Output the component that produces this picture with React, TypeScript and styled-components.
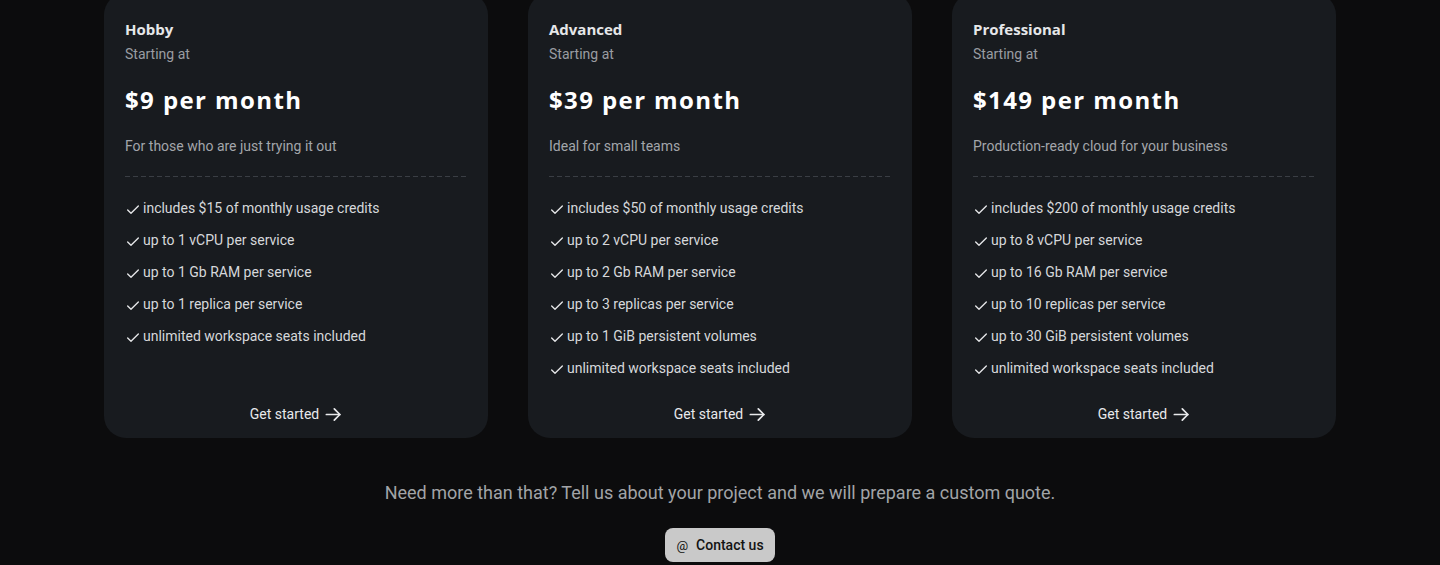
import React from "react";
import styled, { createGlobalStyle } from "styled-components";

const Global = createGlobalStyle`
  html, body { margin: 0; padding: 0; background: #0c0c0d; }
  body { font-family: Roboto, "Liberation Sans", sans-serif; color: #d4d6d9; overflow: hidden; }
  * { box-sizing: border-box; }
`;

const Page = styled.div`
  width: 1440px;
  height: 565px;
  overflow: hidden;
  display: flex;
  flex-direction: column;
  align-items: center;
`;

const Cards = styled.div`
  margin-top: -7px;
  display: grid;
  grid-template-columns: repeat(3, 384px);
  gap: 40px;
`;

const Card = styled.div`
  background: #181b1f;
  border-radius: 22px;
  padding: 25px 20px 14px 21px;
  display: flex;
  flex-direction: column;
  height: 445px;
`;

const Name = styled.div`
  font-family: "Open Sans", "DejaVu Sans", sans-serif;
  font-weight: 700;
  font-size: 15px;
  line-height: 22px;
  color: #e6e7e9;
`;

const Starting = styled.div`
  font-size: 14px;
  line-height: 20px;
  margin-top: 4px;
  color: #9a9da2;
`;

const Price = styled.div`
  font-family: "Open Sans", "DejaVu Sans", sans-serif;
  font-weight: 700;
  font-size: 24px;
  line-height: 32px;
  margin-top: 20px;
  letter-spacing: 1.4px;
  color: #ffffff;
`;

const Desc = styled.div`
  font-size: 14px;
  line-height: 20px;
  margin-top: 20px;
  color: #a3a6ab;
`;

const Divider = styled.div`
  margin-top: 20px;
  height: 1px;
  background-image: linear-gradient(to right, #3a3e44 60%, transparent 40%);
  background-size: 8px 1px;
  background-repeat: repeat-x;
`;

const Features = styled.ul`
  list-style: none;
  margin: 21px 0 0 0;
  padding: 0;
  display: flex;
  flex-direction: column;
  gap: 12px;
  flex: 1;
`;

const Feature = styled.li`
  display: flex;
  align-items: center;
  gap: 2px;
  font-size: 14px;
  line-height: 20px;
  color: #d6d8db;
`;

const CheckIcon = styled.svg`
  width: 16px;
  height: 16px;
  flex: none;
  margin-top: 3px;
`;

const GetStarted = styled.a`
  align-self: center;
  display: flex;
  align-items: center;
  gap: 5px;
  font-size: 14px;
  font-weight: 400;
  line-height: 20px;
  color: #e8e9eb;
  text-decoration: none;
`;

const Note = styled.p`
  margin: 43px 0 0 0;
  font-size: 18px;
  line-height: 24px;
  color: #a2a4a7;
`;

const Contact = styled.button`
  margin-top: 23px;
  height: 34px;
  padding: 0 11px 0 11px;
  border: none;
  border-radius: 8px;
  background: #c9c9c9;
  color: #131313;
  font-family: Roboto, "Liberation Sans", sans-serif;
  font-size: 14px;
  font-weight: 500;
  display: flex;
  align-items: center;
  gap: 8px;
`;

const At = styled.span`
  font-size: 13px;
  font-weight: 400;
`;

const Check = () => (
  <CheckIcon viewBox="0 0 24 24" fill="none" stroke="#e6e7e9" strokeWidth={2} strokeLinecap="round" strokeLinejoin="round">
    <path d="M20 6 9 17l-5-5" />
  </CheckIcon>
);

const Arrow = () => (
  <svg width="19" height="19" viewBox="0 0 24 24" fill="none" stroke="#e8e9eb" strokeWidth={2.2} strokeLinecap="round" strokeLinejoin="round">
    <path d="M3 12h17" />
    <path d="m13 5 7 7-7 7" />
  </svg>
);

const plans = [
  {
    name: "Hobby",
    price: "$9 per month",
    desc: "For those who are just trying it out",
    features: [
      "includes $15 of monthly usage credits",
      "up to 1 vCPU per service",
      "up to 1 Gb RAM per service",
      "up to 1 replica per service",
      "unlimited workspace seats included",
    ],
  },
  {
    name: "Advanced",
    price: "$39 per month",
    desc: "Ideal for small teams",
    features: [
      "includes $50 of monthly usage credits",
      "up to 2 vCPU per service",
      "up to 2 Gb RAM per service",
      "up to 3 replicas per service",
      "up to 1 GiB persistent volumes",
      "unlimited workspace seats included",
    ],
  },
  {
    name: "Professional",
    price: "$149 per month",
    desc: "Production-ready cloud for your business",
    features: [
      "includes $200 of monthly usage credits",
      "up to 8 vCPU per service",
      "up to 16 Gb RAM per service",
      "up to 10 replicas per service",
      "up to 30 GiB persistent volumes",
      "unlimited workspace seats included",
    ],
  },
];

export default function App() {
  return (
    <Page>
      <Global />
      <Cards>
        {plans.map((p) => (
          <Card key={p.name}>
            <Name>{p.name}</Name>
            <Starting>Starting at</Starting>
            <Price>{p.price}</Price>
            <Desc>{p.desc}</Desc>
            <Divider />
            <Features>
              {p.features.map((f) => (
                <Feature key={f}>
                  <Check />
                  {f}
                </Feature>
              ))}
            </Features>
            <GetStarted href="#">
              Get started
              <Arrow />
            </GetStarted>
          </Card>
        ))}
      </Cards>
      <Note>Need more than that? Tell us about your project and we will prepare a custom quote.</Note>
      <Contact>
        <At>@</At>
        Contact us
      </Contact>
    </Page>
  );
}
